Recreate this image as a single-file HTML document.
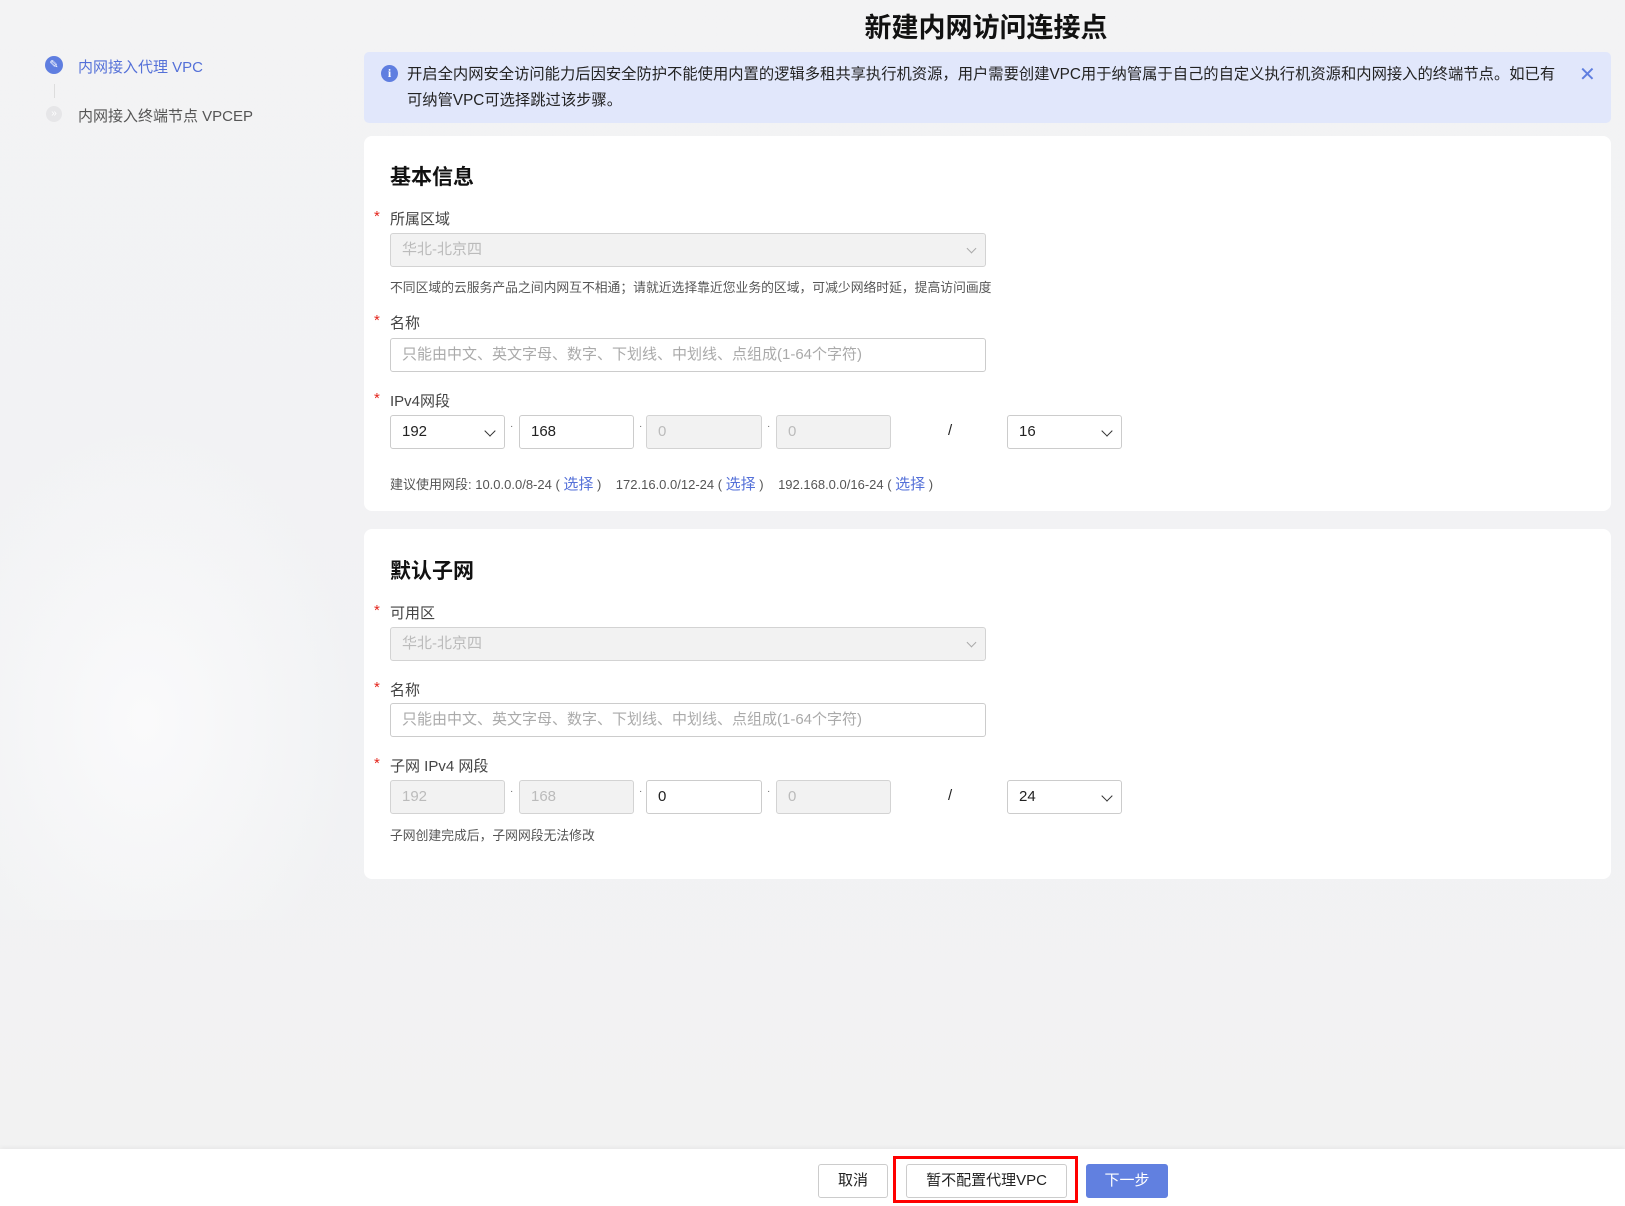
<!DOCTYPE html>
<html><head><meta charset="utf-8"><style>
*{box-sizing:border-box;margin:0;padding:0}
body{width:1625px;height:1206px;position:relative;overflow:hidden;background:linear-gradient(180deg,#f3f3f4 0%,#f1f2f4 60%,#f2f2f2 100%);font-family:"Liberation Sans","Noto Sans CJK SC",sans-serif;color:#333}
.a{position:absolute;white-space:nowrap}
.title{left:0;width:1972px;text-align:center;top:6px;font-size:27px;font-weight:bold;color:#111}
.card{position:absolute;left:364px;width:1247px;background:#fff;border-radius:8px}
.h{font-size:21px;font-weight:bold;color:#111}
.lbl{font-size:15px;color:#444}
.star{color:#e4241b;font-size:15px}
.box{position:absolute;height:34px;border:1px solid #ccc;border-radius:3px;background:#fff;font-size:15px;line-height:32px;padding-left:11px;color:#222}
.dis{background:#f2f2f2;color:#bbb;border-color:#d3d3d3}
.ph{color:#aaa}
.hint{font-size:12.8px;color:#555}
.chev{position:absolute;right:10px;top:11px;width:8px;height:8px;border-right:1.5px solid #333;border-bottom:1.5px solid #333;transform:rotate(45deg)}
.chev.l{border-color:#aaa;width:7px;height:7px}
.dot{position:absolute;font-size:10px;color:#666}
.lnk{color:#5470d8}
.btn{position:absolute;top:1164px;height:34px;border:1px solid #ccc;border-radius:3px;background:#fff;font-size:15px;line-height:32px;text-align:center;color:#222}
</style></head><body>
<div class="a title">新建内网访问连接点</div>
<div style="position:absolute;left:0;top:420px;width:360px;height:500px;background:radial-gradient(ellipse at 40% 60%,#fafafb 0%,rgba(250,250,251,0) 70%)"></div>
<div style="position:absolute;left:45px;top:56px;width:18px;height:18px;border-radius:50%;background:#5f7ee0;color:#fff;font-size:11px;text-align:center;line-height:18px">✎</div>
<div class="a" style="left:78px;top:56px;font-size:15px;color:#5470d8">内网接入代理 VPC</div>
<div style="position:absolute;left:54px;top:84px;width:1px;height:14px;background:#ddd"></div>
<div style="position:absolute;left:46px;top:106px;width:16px;height:16px;border-radius:50%;background:#e6e6e8;color:#fff;font-size:10px;text-align:center;line-height:16px">»</div>
<div class="a" style="left:78px;top:105px;font-size:15px;color:#555">内网接入终端节点 VPCEP</div>
<div style="position:absolute;left:364px;top:52px;width:1247px;height:71px;background:#e1e7fb;border-radius:5px"></div>
<div style="position:absolute;left:381px;top:65px;width:17px;height:17px;border-radius:50%;background:#5f7ee0;color:#fff;font-size:12px;font-weight:bold;text-align:center;line-height:17px;font-family:'Liberation Serif',serif">i</div>
<div class="a" style="left:407px;top:62px;font-size:15.3px;line-height:26px;color:#222">开启全内网安全访问能力后因安全防护不能使用内置的逻辑多租共享执行机资源，用户需要创建VPC用于纳管属于自己的自定义执行机资源和内网接入的终端节点。如已有<br>可纳管VPC可选择跳过该步骤。</div>
<div class="a" style="left:1579px;top:62px;font-size:20px;color:#5f7ee0">✕</div>
<div class="card" style="top:136px;height:375px"></div>
<div class="a h" style="left:390px;top:161px">基本信息</div>
<div class="a star" style="left:374px;top:208px">*</div><div class="a lbl" style="left:390px;top:208px">所属区域</div>
<div class="box dis" style="left:390px;top:233px;width:596px">华北-北京四<span class="chev l"></span></div>
<div class="a hint" style="left:390px;top:277px">不同区域的云服务产品之间内网互不相通；请就近选择靠近您业务的区域，可减少网络时延，提高访问画度</div>
<div class="a star" style="left:374px;top:312px">*</div><div class="a lbl" style="left:390px;top:312px">名称</div>
<div class="box ph" style="left:390px;top:338px;width:596px">只能由中文、英文字母、数字、下划线、中划线、点组成(1-64个字符)</div>
<div class="a star" style="left:374px;top:390px">*</div><div class="a lbl" style="left:390px;top:390px">IPv4网段</div>
<div class="box" style="left:390px;top:415px;width:115px">192<span class="chev"></span></div>
<div class="dot" style="left:510px;top:421px">·</div>
<div class="box" style="left:519px;top:415px;width:115px">168</div>
<div class="dot" style="left:639px;top:421px">·</div>
<div class="box dis" style="left:646px;top:415px;width:116px">0</div>
<div class="dot" style="left:767px;top:421px">·</div>
<div class="box dis" style="left:776px;top:415px;width:115px">0</div>
<div class="a" style="left:948px;top:422px;font-size:15px;color:#222">/</div>
<div class="box" style="left:1007px;top:415px;width:115px">16<span class="chev"></span></div>
<div class="a hint" style="left:390px;top:473px;font-size:13px">建议使用网段: 10.0.0.0/8-24 ( <span class="lnk" style="font-size:15px">选择</span> ) &nbsp;&nbsp; 172.16.0.0/12-24 ( <span class="lnk" style="font-size:15px">选择</span> ) &nbsp;&nbsp; 192.168.0.0/16-24 ( <span class="lnk" style="font-size:15px">选择</span> )</div>
<div class="card" style="top:529px;height:350px"></div>
<div class="a h" style="left:390px;top:555px">默认子网</div>
<div class="a star" style="left:374px;top:602px">*</div><div class="a lbl" style="left:390px;top:602px">可用区</div>
<div class="box dis" style="left:390px;top:627px;width:596px">华北-北京四<span class="chev l"></span></div>
<div class="a star" style="left:374px;top:679px">*</div><div class="a lbl" style="left:390px;top:679px">名称</div>
<div class="box ph" style="left:390px;top:703px;width:596px">只能由中文、英文字母、数字、下划线、中划线、点组成(1-64个字符)</div>
<div class="a star" style="left:374px;top:755px">*</div><div class="a lbl" style="left:390px;top:755px">子网 IPv4 网段</div>
<div class="box dis" style="left:390px;top:780px;width:115px">192</div>
<div class="dot" style="left:510px;top:786px">·</div>
<div class="box dis" style="left:519px;top:780px;width:115px">168</div>
<div class="dot" style="left:639px;top:786px">·</div>
<div class="box" style="left:646px;top:780px;width:116px">0</div>
<div class="dot" style="left:767px;top:786px">·</div>
<div class="box dis" style="left:776px;top:780px;width:115px">0</div>
<div class="a" style="left:948px;top:787px;font-size:15px;color:#222">/</div>
<div class="box" style="left:1007px;top:780px;width:115px">24<span class="chev"></span></div>
<div class="a hint" style="left:390px;top:825px">子网创建完成后，子网网段无法修改</div>
<div style="position:absolute;left:0;top:1149px;width:1625px;height:57px;background:#fff;box-shadow:0 -2px 4px rgba(0,0,0,0.04)"></div>
<div class="btn" style="left:818px;width:70px">取消</div>
<div style="position:absolute;left:893px;top:1156px;width:185px;height:47px;border:3px solid #f00"></div>
<div class="btn" style="left:906px;width:161px">暂不配置代理VPC</div>
<div class="btn" style="left:1086px;width:82px;background:#6180e0;border-color:#6180e0;color:#fff">下一步</div>
</body></html>
